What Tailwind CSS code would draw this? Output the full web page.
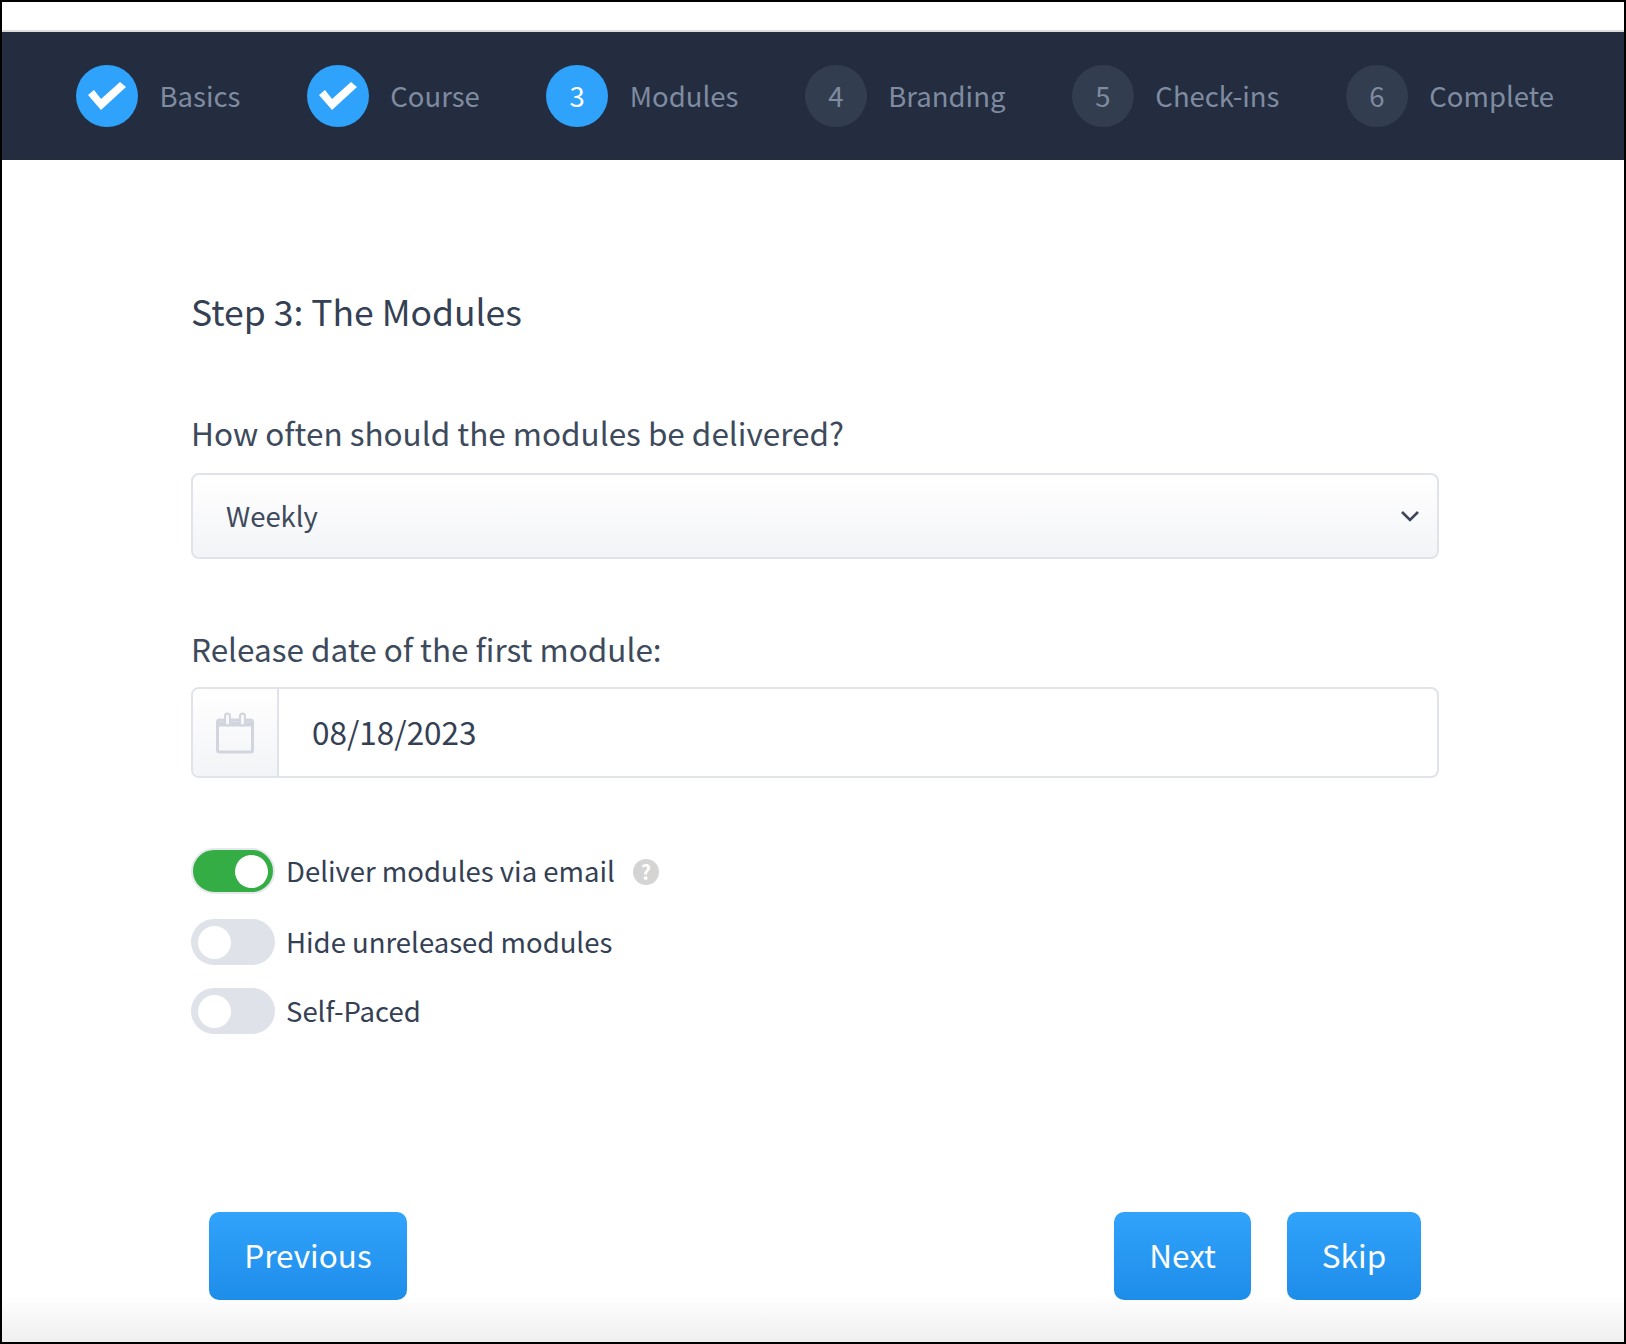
<!DOCTYPE html>
<html>
<head>
<meta charset="UTF-8">
<title>Step 3: The Modules</title>
<script src="https://cdn.jsdelivr.net/npm/@tailwindcss/browser@4"></script>
</head>
<body class="bg-black font-['Noto_Sans_CJK_SC',sans-serif]">
<div class="w-[1626px] h-[1344px] border-t-2 border-b-2 border-l-2 border-r-2 border-black bg-white flex flex-col overflow-hidden">
    <!-- steps -->
    <div class="h-[28px] border-b-2 border-[#dcdcdc] box-content"></div>
    <nav class="h-[128px] shrink-0 bg-[#232d3f] flex items-center pl-[74px] gap-[66.4px] text-[27.5px] text-[#7f8ba0]">
        <div class="flex items-center gap-[21.5px]">
            <span class="w-[62px] h-[62px] rounded-full bg-[#2fa2fb] flex items-center justify-center">
                <svg class="w-[40px] h-[30px]" viewBox="0 0 40 30"><path d="M1 14l6-5 7 9L33 1l6 5-25 23z" fill="#fff"/></svg>
            </span>
            <span class="pb-[1px]">Basics</span>
        </div>
        <div class="flex items-center gap-[21.5px]">
            <span class="w-[62px] h-[62px] rounded-full bg-[#2fa2fb] flex items-center justify-center">
                <svg class="w-[40px] h-[30px]" viewBox="0 0 40 30"><path d="M1 14l6-5 7 9L33 1l6 5-25 23z" fill="#fff"/></svg>
            </span>
            <span class="pb-[1px]">Course</span>
        </div>
        <div class="flex items-center gap-[21.5px]">
            <span class="w-[62px] h-[62px] rounded-full bg-[#2fa2fb] text-white flex items-center justify-center">3</span>
            <span class="pb-[1px]">Modules</span>
        </div>
        <div class="flex items-center gap-[21.5px]">
            <span class="w-[62px] h-[62px] rounded-full bg-[#323d4f] flex items-center justify-center">4</span>
            <span class="pb-[1px]">Branding</span>
        </div>
        <div class="flex items-center gap-[21.5px]">
            <span class="w-[62px] h-[62px] rounded-full bg-[#323d4f] flex items-center justify-center">5</span>
            <span class="pb-[1px]">Check-ins</span>
        </div>
        <div class="flex items-center gap-[21.5px]">
            <span class="w-[62px] h-[62px] rounded-full bg-[#323d4f] flex items-center justify-center">6</span>
            <span class="pb-[1px]">Complete</span>
        </div>
    </nav>

    <!-- form -->
    <main class="flex-1 min-h-0 flex flex-col pl-[189px] pr-[185px] bg-linear-to-b from-white from-[96%] to-[#efefef]">
        <h1 class="mt-[127px] text-[35.5px] leading-[48px] text-[#344054]">Step 3: The Modules</h1>

        <label class="mt-[75px] text-[31.5px] leading-[44px] text-[#3d4a5c]">How often should the modules be delivered?</label>
        <div class="mt-[19px] h-[86px] shrink-0 rounded-[8px] border-2 border-[#e0e3ea] bg-linear-to-b from-white to-[#f3f4f7] flex items-center justify-between pl-[33px] pr-[17px] text-[27.5px] text-[#3d4a5c]">
            <span>Weekly</span>
            <svg class="w-[20px] h-[14px]" viewBox="0 0 20 14"><path d="M2 3l8 8 8-8" fill="none" stroke="#3d4658" stroke-width="2.6"/></svg>
        </div>

        <label class="mt-[67px] text-[31.5px] leading-[44px] text-[#3d4a5c]">Release date of the first module:</label>
        <div class="mt-[17px] h-[91px] shrink-0 rounded-[8px] border-2 border-[#e0e3ea] flex items-center">
            <div class="w-[86px] h-full rounded-l-[6px] border-r-2 border-[#e0e3ea] bg-linear-to-b from-white to-[#f3f4f7] flex items-center justify-center">
                <svg class="w-[38px] h-[42px]" viewBox="0 0 38 42" fill="none" stroke="#d2d5de" stroke-width="3">
                    <rect x="1.5" y="8" width="35" height="32" rx="2"/>
                    <path d="M1.5 12h35" stroke-width="5"/>
                    <rect x="9" y="1.5" width="5" height="12" rx="2.5" fill="#f8f8fa" stroke-width="2"/>
                    <rect x="24" y="1.5" width="5" height="12" rx="2.5" fill="#f8f8fa" stroke-width="2"/>
                </svg>
            </div>
            <span class="pl-[33px] pb-[2px] text-[31.5px] text-[#344054]">08/18/2023</span>
        </div>

        <div class="mt-[70px] flex flex-col shrink-0 text-[27.5px] text-[#344054]">
            <div class="flex items-center gap-[11px] h-[46px]">
                <span class="w-[84px] h-[46px] rounded-full border-2 border-[#e6e8ee] bg-[#34ad45] flex items-center justify-end pr-[5px]">
                    <span class="w-[33px] h-[33px] rounded-full bg-white"></span>
                </span>
                <span>Deliver modules via email</span>
                <span class="ml-[7px] mt-[2px] w-[26px] h-[26px] rounded-full bg-[#d4d4d4] text-white text-[20px] font-bold flex items-center justify-center">?</span>
            </div>
            <div class="mt-[25px] flex items-center gap-[11px] h-[46px]">
                <span class="w-[84px] h-[46px] rounded-full bg-[#dfe2e9] flex items-center pl-[7px]">
                    <span class="w-[33px] h-[33px] rounded-full bg-white"></span>
                </span>
                <span>Hide unreleased modules</span>
            </div>
            <div class="mt-[23px] flex items-center gap-[11px] h-[46px]">
                <span class="w-[84px] h-[46px] rounded-full bg-[#dfe2e9] flex items-center pl-[7px]">
                    <span class="w-[33px] h-[33px] rounded-full bg-white"></span>
                </span>
                <span>Self-Paced</span>
            </div>
        </div>

        <div class="mt-[178px] ml-[18px] mr-[18px] flex items-center shrink-0 text-[31.5px] text-white">
            <button class="w-[198px] h-[88px] pb-[2px] rounded-[10px] bg-linear-to-b from-[#31a3fb] to-[#1d8dea]">Previous</button>
            <button class="ml-auto w-[137px] h-[88px] pb-[2px] rounded-[10px] bg-linear-to-b from-[#31a3fb] to-[#1d8dea]">Next</button>
            <button class="ml-[36px] w-[134px] h-[88px] pb-[2px] rounded-[10px] bg-linear-to-b from-[#31a3fb] to-[#1d8dea]">Skip</button>
        </div>
    </main>
</div>
</body>
</html>
